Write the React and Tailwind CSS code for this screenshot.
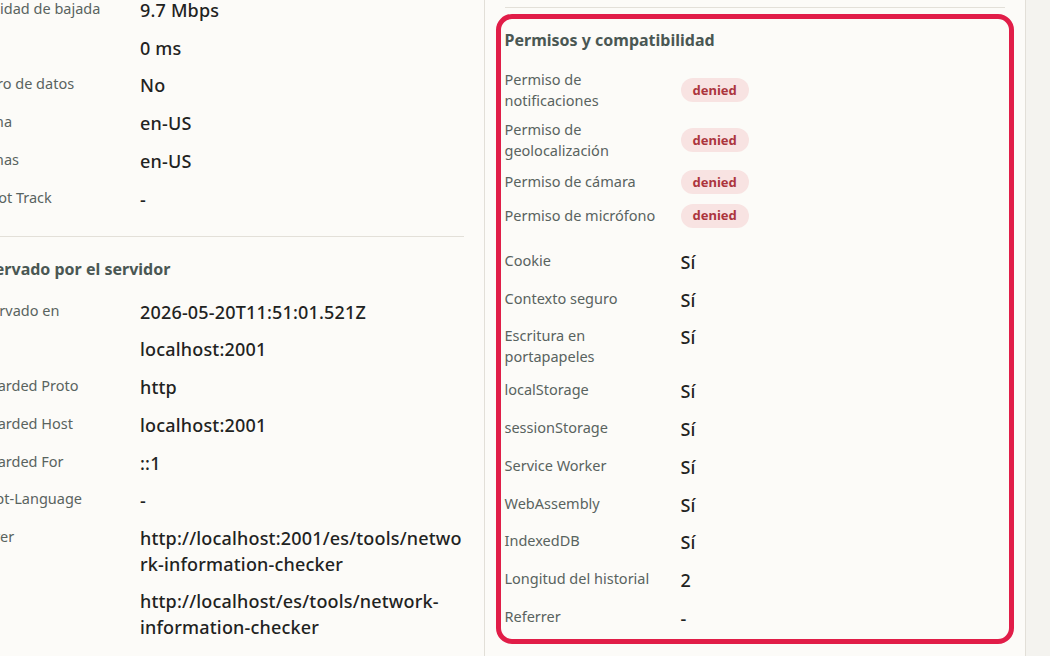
import React from "react";

const networkRows = [
  { label: "Velocidad de bajada", value: "9.7 Mbps" },
  { label: "RTT", value: "0 ms" },
  { label: "Ahorro de datos", value: "No" },
  { label: "Idioma", value: "en-US" },
  { label: "Idiomas", value: "en-US" },
  { label: "Do Not Track", value: "-" },
];

const serverRows = [
  { label: "Observado en", value: "2026-05-20T11:51:01.521Z" },
  { label: "Host", value: "localhost:2001" },
  { label: "Forwarded Proto", value: "http" },
  { label: "Forwarded Host", value: "localhost:2001" },
  { label: "Forwarded For", value: "::1" },
  { label: "Accept-Language", value: "-" },
  { label: "Referer", value: "http://localhost:2001/es/tools/network-information-checker" },
  { label: "URL", value: "http://localhost/es/tools/network-information-checker" },
];

const permissions = [
  { label: "Permiso de notificaciones", state: "denied" },
  { label: "Permiso de geolocalización", state: "denied" },
  { label: "Permiso de cámara", state: "denied" },
  { label: "Permiso de micrófono", state: "denied" },
];

const features = [
  { label: "Cookie", value: "Sí" },
  { label: "Contexto seguro", value: "Sí" },
  { label: "Escritura en portapapeles", value: "Sí" },
  { label: "localStorage", value: "Sí" },
  { label: "sessionStorage", value: "Sí" },
  { label: "Service Worker", value: "Sí" },
  { label: "WebAssembly", value: "Sí" },
  { label: "IndexedDB", value: "Sí" },
  { label: "Longitud del historial", value: "2" },
  { label: "Referrer", value: "-" },
];

const InfoRow = ({ label, value }) => (
  <div className="grid grid-cols-[160px_1fr] gap-4 py-1.5">
    <dt className="text-[14.5px] leading-[21px] text-[#59635f]">{label}</dt>
    <dd className="text-[18px] leading-[25.7px] tracking-[0.01em] font-medium text-[#1f2322] [overflow-wrap:anywhere]">
      {value}
    </dd>
  </div>
);

const PermissionRow = ({ label, state }) => (
  <div className="grid grid-cols-[160px_1fr] gap-4 py-1 items-center">
    <dt className="text-[14.5px] leading-[21px] text-[#59635f]">{label}</dt>
    <dd>
      <span className="inline-flex items-center h-6 px-3 rounded-full bg-[#f8e3e2] text-[#ac353d] text-[13px] font-bold">
        {state}
      </span>
    </dd>
  </div>
);

const SectionTitle = ({ children }) => (
  <h3 className="text-[16px] leading-[22.5px] font-bold text-[#4a5753] mb-[13px]">{children}</h3>
);

export default function App() {
  return (
    <div className="min-h-screen overflow-hidden bg-[#f4f3ef] font-['Noto_Sans',sans-serif]">
      <div className="ml-[-56px] w-[1082px] min-h-screen flex bg-[#fcfbf8] border-r border-[#e2dfd8]">
        {/* left column */}
        <div className="w-[540px] px-5">
          <section className="-mt-[8px] pb-[18px] border-b border-[#e3e0d9]">
            <dl>
              {networkRows.map((row) => (
                <InfoRow key={row.label} {...row} />
              ))}
            </dl>
          </section>
          <section className="pt-[21px]">
            <SectionTitle>Observado por el servidor</SectionTitle>
            <dl>
              {serverRows.map((row) => (
                <InfoRow key={row.label} {...row} />
              ))}
            </dl>
          </section>
        </div>

        {/* right column */}
        <div className="w-[542px] px-5 border-l border-[#e2dfd8]">
          <div className="h-[8px] border-b border-[#e3e0d9]"></div>
          <section className="relative pt-[21px]">
            <SectionTitle>Permisos y compatibilidad</SectionTitle>
            <dl>
              {permissions.map((p) => (
                <PermissionRow key={p.label} {...p} />
              ))}
            </dl>
            <dl className="mt-3">
              {features.map((row) => (
                <InfoRow key={row.label} {...row} />
              ))}
            </dl>
            {/* highlight annotation */}
            <div className="pointer-events-none absolute left-[-9px] right-[-9px] top-[6px] bottom-[-7px] border-[5px] border-[#e11d48] rounded-[16px]"></div>
          </section>
        </div>
      </div>
    </div>
  );
}
